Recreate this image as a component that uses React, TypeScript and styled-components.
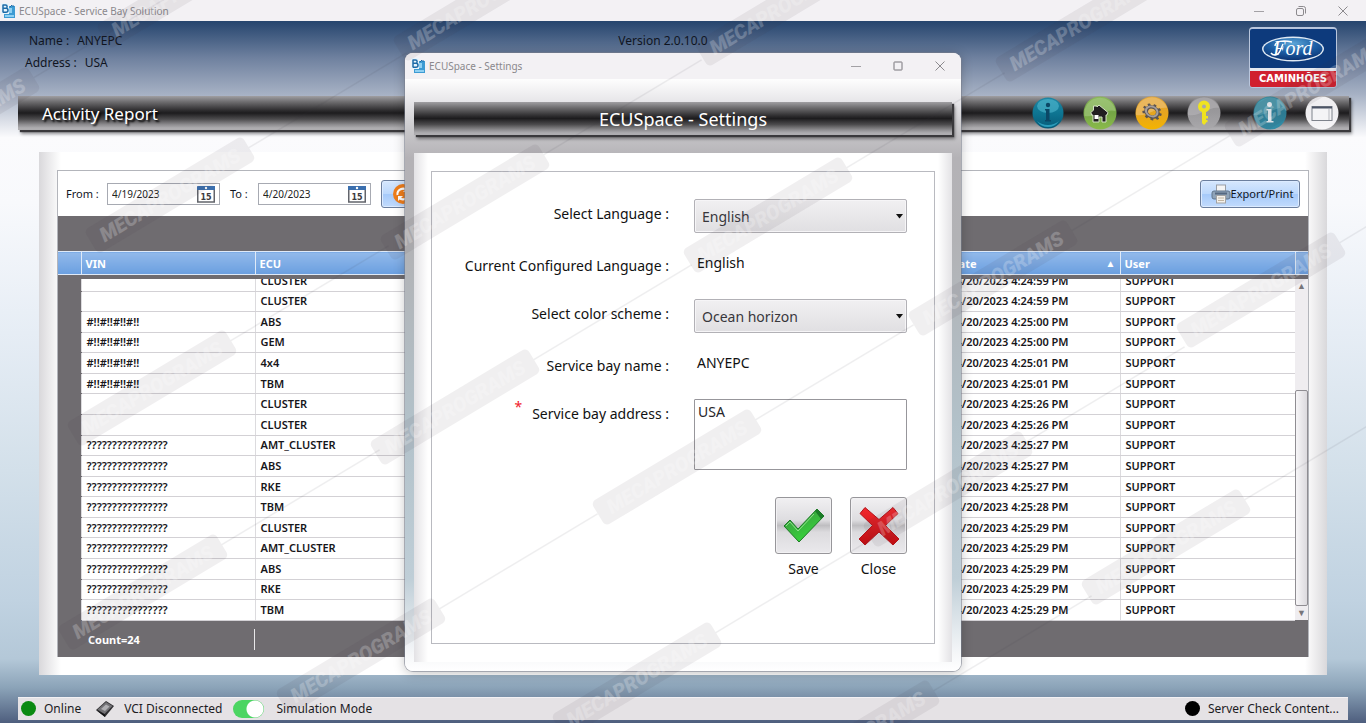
import React, { useState } from "react";
import styled, { createGlobalStyle, css } from "styled-components";

const GlobalStyle = createGlobalStyle`
  * { box-sizing: border-box; }
  body { margin: 0; background: #55637f; }
  body, button, input, select, textarea, table {
    font-family: "Noto Sans", "Open Sans", sans-serif;
  }
  button { padding: 0; margin: 0; cursor: pointer; }
`;

const Shell = styled.div`
  position: relative;
  display: flex;
  flex-direction: column;
  min-height: 100vh;
  overflow: hidden;
  color: #10151f;
  background: linear-gradient(
    180deg,
    #27466f 0%,
    #27466f 3%,
    #6f819f 8%,
    #a6b1c4 13%,
    #fbfbfd 19%,
    #f8f9fc 28%,
    #e6edf5 46%,
    #d3e0ea 65%,
    #c0d2e1 83%,
    #b4c8d8 91%,
    #8ba3b8 95%,
    #4c5c7c 100%
  );
`;

const TitleBar = styled.header<{ $tall?: boolean }>`
  display: flex;
  align-items: center;
  height: ${(p) => (p.$tall ? 26 : 21)}px;
  padding-left: ${(p) => (p.$tall ? 6 : 1)}px;
  padding-right: ${(p) => (p.$tall ? 0 : 2)}px;
  background: #f3f1f4;
  color: #8a888c;
  font-size: 10px;
  flex: none;
  h1, h2 { margin: 0 0 0 3px; font-size: 10px; font-weight: 400; flex: 1; }
`;

const WindowButton = styled.button`
  display: flex;
  align-items: center;
  justify-content: center;
  width: 42px;
  height: 20px;
  border: 0;
  background: none;
`;

const Identity = styled.div`
  display: flex;
  justify-content: space-between;
  align-items: flex-start;
  height: 75px;
  padding: 6px 29px 0 25px;
  flex: none;
`;

const Side = styled.div<{ $end?: boolean }>`
  flex: 1;
  display: flex;
  flex-direction: column;
  align-items: ${(p) => (p.$end ? "flex-end" : "flex-start")};
`;

const InfoLine = styled.div<{ $indent?: number }>`
  display: flex;
  gap: 8px;
  height: 22px;
  line-height: 28px;
  padding-left: ${(p) => p.$indent ?? 0}px;
  font-size: 12px;
`;

const Version = styled(InfoLine)`
  padding-right: 36px;
`;

const bandFill = css`
  background: linear-gradient(
    180deg,
    #a09fa2 0%,
    #6c6b6d 18%,
    #2e2d2f 42%,
    #1d1c1e 50%,
    #4c4b4d 68%,
    #8d8c8f 84%,
    #aeadb0 94%,
    #aeadb0 100%
  );
  box-shadow: 2px 2px 1px #3a393c, 3px 4px 3px rgba(0, 0, 0, 0.4);
`;

const Band = styled.div`
  ${bandFill}
  display: flex;
  align-items: center;
  justify-content: space-between;
  height: 34px;
  margin: 0 17px 0 18px;
  padding: 0 10px 0 24px;
  flex: none;
  h2 {
    margin: 0;
    color: #fff;
    font-size: 17px;
    font-weight: 400;
    text-shadow: 2px 2px 2px #000;
  }
`;

const IconBar = styled.nav`
  display: flex;
  align-items: center;
  gap: 18px;
  button:nth-child(4) { margin-right: 14px; }
`;

const RoundButton = styled.button`
  width: 34px;
  height: 34px;
  border: 0;
  background: none;
  svg { display: block; }
`;

const Report = styled.main`
  display: flex;
  flex-direction: column;
  flex: 1;
  margin: 22px 39px 0;
  padding: 18px;
  background: linear-gradient(90deg, #d9d8db 0, #fff 22px, #fff calc(100% - 22px), #d9d8db 100%);
`;

const ReportFrame = styled.section`
  display: flex;
  flex-direction: column;
  flex: 1;
  border: 1px solid #b3b5bb;
  border-bottom: 0;
`;

const Filters = styled.form`
  display: flex;
  align-items: center;
  height: 45px;
  padding: 0 8px;
  background: #fff;
  font-size: 11px;
  flex: none;
`;

const FilterLabel = styled.label<{ $second?: boolean }>`
  width: ${(p) => (p.$second ? 28 : 41)}px;
  margin-left: ${(p) => (p.$second ? 10 : 0)}px;
`;

const DateBox = styled.span`
  display: flex;
  align-items: center;
  width: 113px;
  height: 22px;
  padding-right: 4px;
  border: 1px solid #a7aab2;
  background: #fff;
  input {
    flex: 1;
    min-width: 0;
    padding: 0 4px;
    border: 0;
    background: none;
    font-size: 10px;
    color: #222;
  }
`;

const BlueButton = styled.button<{ $push?: boolean }>`
  display: flex;
  align-items: center;
  justify-content: ${(p) => (p.$push ? "center" : "flex-start")};
  width: 100px;
  height: 28px;
  margin-left: ${(p) => (p.$push ? "auto" : "10px")};
  padding-left: ${(p) => (p.$push ? 4 : 10)}px;
  border: 1px solid #6c7f9e;
  border-radius: 3px;
  background: linear-gradient(180deg, #d6e7fd 0%, #bcd8fc 48%, #a6cafa 52%, #c2dbfc 100%);
  box-shadow: inset 0 0 0 1px #dcebff;
  font-size: 11px;
  color: #10151f;
`;

const GridTop = styled.div`
  height: 35px;
  background: #6f6c70;
  flex: none;
`;

const DataTable = styled.table`
  width: 100%;
  border-collapse: collapse;
  table-layout: fixed;
  font-size: 11px;
  font-weight: 600;
  th, td { padding: 0 0 0 5px; text-align: left; white-space: nowrap; }
  col.mark { width: 23px; }
  col.vin { width: 174px; }
  col.date { width: 174px; }
  col.user { width: 175px; }
  col.bar { width: 13px; }
`;

const HeadTable = styled(DataTable)`
  flex: none;
  th {
    height: 23px;
    padding-left: 4px;
    color: #fff;
    font-weight: 700;
    border-left: 1px solid #dfeaf8;
    border-top: 1px solid #dfeaf8;
    border-bottom: 1px solid #dfeaf8;
    background: linear-gradient(180deg, #92b9ea, #6a9fe0);
  }
  th:first-child { border-left: 0; }
`;

const SortMark = styled.span`
  float: right;
  margin-right: 4px;
  font-size: 10px;
  line-height: 14px;
`;

const GridBody = styled.div`
  display: flex;
  flex: 1;
  min-height: 346px;
  border-top: 4px solid #6f6c70;
  background: #6f6c70;
`;

const Rows = styled.div`
  display: flex;
  flex-direction: column;
  justify-content: flex-end;
  flex: 1;
  height: 342px;
  overflow: hidden;
`;

const BodyTable = styled(DataTable)`
  height: 350px;
  flex: none;
  td {
    background: #fff;
    border-bottom: 1px solid #d3d1d5;
    border-left: 1px solid #dcdbde;
    line-height: 18px;
    color: #17161a;
  }
  td:nth-child(4) { padding-left: 9px; }
  td:first-child { background: #6f6c70; border-left: 0; border-bottom-color: #6f6c70; }
`;

const ScrollTrack = styled.div`
  display: flex;
  flex-direction: column;
  justify-content: space-between;
  align-items: center;
  width: 13px;
  height: 341px;
  background: #efedf0;
  color: #77757a;
  font-size: 9px;
  line-height: 14px;
`;

const ScrollThumb = styled.div`
  width: 13px;
  height: 216px;
  margin-top: auto;
  border: 1px solid #8f8d92;
  border-radius: 2px;
  background: linear-gradient(90deg, #f7f6f8, #dcdade);
`;

const GridFoot = styled.footer`
  display: flex;
  align-items: center;
  height: 36px;
  padding-left: 30px;
  background: #6f6c70;
  color: #fff;
  font-size: 11px;
  font-weight: 700;
  flex: none;
  span { width: 167px; height: 21px; line-height: 21px; border-right: 1px solid #e8e7e9; }
`;

const StatusBar = styled.footer`
  display: flex;
  align-items: center;
  height: 23px;
  margin: 22px 18px 4px;
  padding: 0 9px 1px 3px;
  border-top: 1px solid #f3f1f4;
  background: #e5e2e5;
  font-size: 12px;
  line-height: 20px;
  color: #1c1b1f;
  flex: none;
`;

const Dot = styled.i<{ $color: string }>`
  width: 15px;
  height: 15px;
  margin-right: 8px;
  border-radius: 50%;
  background: ${(p) => p.$color};
`;

const StatusText = styled.span<{ $before?: number; $after?: number }>`
  margin-left: ${(p) => p.$before ?? 0}px;
  margin-right: ${(p) => p.$after ?? 0}px;
`;

const Spacer = styled.span`
  flex: 1;
`;

const Switch = styled.input`
  appearance: none;
  width: 31px;
  height: 18px;
  margin: 0 13px 0 0;
  border-radius: 9px;
  background: radial-gradient(circle 8px at 22px 9px, #fff 8px, transparent 9px) #4cd562;
`;

const Overlay = styled.div`
  position: absolute;
  inset: 0;
  display: flex;
  justify-content: center;
  align-items: flex-start;
  padding-top: 53px;
`;

const Dialog = styled.section`
  display: flex;
  flex-direction: column;
  width: 556px;
  border-radius: 8px;
  overflow: hidden;
  color: #111;
  background: linear-gradient(
    180deg,
    #ffffff 4%,
    #e6e5e8 8%,
    #c6c5c8 13%,
    #b4b2b6 17%,
    #b2b2b5 30%,
    #b2c1c9 60%,
    #bfced7 85%,
    #f4f6f8 97%,
    #fff 100%
  );
  box-shadow: 0 0 0 1px rgba(120, 125, 140, 0.55), 0 2px 12px rgba(0, 0, 0, 0.25);
`;

const DialogBand = styled.div`
  ${bandFill}
  height: 33px;
  margin: 23px 9px 0;
  color: #fff;
  font-size: 18px;
  line-height: 34px;
  text-align: center;
`;

const DialogPanel = styled.div`
  margin: 18px 9px 9px;
  padding: 18px 17px;
  background: linear-gradient(90deg, #e3e2e5 0, #fff 14px, #fff calc(100% - 14px), #e3e2e5 100%);
`;

const SettingsForm = styled.form`
  padding: 27px 27px 64px 0;
  border: 1px solid #b9bac0;
  background: #fff;
  font-size: 14px;
`;

const Fields = styled.div`
  display: grid;
  grid-template-columns: 1fr 213px;
  column-gap: 25px;
  row-gap: 16px;
`;

const FieldLabel = styled.label<{ $plain?: boolean }>`
  height: 34px;
  line-height: ${(p) => (p.$plain ? 34 : 30)}px;
  text-align: right;
`;

const Required = styled.span`
  margin-right: 10px;
  color: #f0202c;
  vertical-align: top;
  line-height: 16px;
`;

const FieldValue = styled.output`
  padding-left: 3px;
  line-height: 28px;
`;

const SelectWrap = styled.div`
  position: relative;
  svg { position: absolute; right: 4px; top: 15px; pointer-events: none; }
`;

const Select = styled.select`
  appearance: none;
  display: block;
  width: 100%;
  height: 34px;
  padding: 0 7px;
  border: 1px solid #b2b1b6;
  border-radius: 2px;
  background: linear-gradient(180deg, #f1f0f2, #e0dfe2);
  box-shadow: inset 0 0 0 1px #f6f5f7;
  color: #38373c;
  font-size: 14px;
`;

const Address = styled.textarea`
  display: block;
  width: 100%;
  height: 71px;
  padding: 2px 3px;
  border: 1px solid #97969b;
  border-radius: 1px;
  resize: none;
  font-size: 14px;
  line-height: 20px;
  color: #26252a;
`;

const Actions = styled.div`
  display: flex;
  justify-content: flex-end;
  gap: 18px;
  margin-top: 27px;
`;

const Action = styled.label`
  display: flex;
  flex-direction: column;
  align-items: center;
  width: 57px;
  gap: 5px;
  line-height: 20px;
  button {
    display: flex;
    align-items: center;
    justify-content: center;
    width: 57px;
    height: 57px;
    border: 1px solid #97969a;
    border-radius: 3px;
    background: linear-gradient(180deg, #f1f0f2 0%, #dedde0 40%, #bfbec1 50%, #dcdbde 62%, #eae9ec 100%);
    box-shadow: inset 0 0 0 1px #f2f1f3;
  }
`;

const WatermarkLayer = styled.svg`
  position: absolute;
  left: 0;
  top: 0;
  pointer-events: none;
`;

const AppGlyph = () => (
  <svg width="15" height="16" viewBox="0 0 15 16" aria-hidden="true">
    <path d="M8 3h6v12H3v-4h5z" fill="#3d9bd3" />
    <path d="M8 5h3v5H8zM4 12h9v2H4z" fill="#8fd0f2" />
    <path d="M0 0h8v11H0z" fill="#e8f4fb" />
    <path d="M2 1.500V9.500M2 2h2.500a1.600 1.600 0 0 1 0 3.300H2M2 5.300h3a2 2 0 0 1 0 4H2" fill="none" stroke="#1c6ba8" strokeWidth="1.500" />
    <path d="M9 4l2-2M12 4V2" stroke="#1c6ba8" />
  </svg>
);

const WindowControls = ({ restore }: { restore?: boolean }) => (
  <>
    <WindowButton type="button" aria-label="Minimize">
      <svg width="10" height="10"><path d="M0 5.500h10" stroke="#a3a1a5" /></svg>
    </WindowButton>
    <WindowButton type="button" aria-label={restore ? "Restore" : "Maximize"}>
      {restore ? (
        <svg width="10" height="10" fill="none" stroke="#8c8a8e">
          <rect x=".5" y="2.500" width="7" height="7" rx="1.500" />
          <path d="M2.500 .5h5a2 2 0 0 1 2 2v5" />
        </svg>
      ) : (
        <svg width="10" height="10" fill="none" stroke="#77757a"><rect x="1" y="1" width="8" height="8" rx=".5" /></svg>
      )}
    </WindowButton>
    <WindowButton type="button" aria-label="Close window">
      <svg width="10" height="10"><path d="M.5.5l9 9m0-9l-9 9" stroke="#8c8a8e" /></svg>
    </WindowButton>
  </>
);

const FordLogo = () => (
  <svg width="88" height="62" viewBox="0 0 88 62" role="img" aria-label="Ford Caminhões">
    <defs>
      <radialGradient id="oval" cx=".5" cy=".25" r=".8">
        <stop offset="0" stopColor="#5da7d8" />
        <stop offset=".5" stopColor="#1d5fa6" />
        <stop offset="1" stopColor="#0a2f6e" />
      </radialGradient>
    </defs>
    <rect width="88" height="61" rx="4" fill="#b9c6dc" />
    <rect x="1" y="2" width="86" height="40" rx="2" fill="#0d3a7c" />
    <rect x="1" y="41" width="86" height="3" fill="#e5e9f0" />
    <path d="M1 44h86v14a2 2 0 0 1-2 2H3a2 2 0 0 1-2-2z" fill="#d0202e" />
    <ellipse cx="44" cy="22" rx="31" ry="12.500" fill="#dfe9f3" />
    <ellipse cx="44" cy="22" rx="29.500" ry="11" fill="url(#oval)" />
    <text x="44" y="28" textAnchor="middle" fontFamily="Liberation Serif, serif" fontStyle="italic" fontSize="20" fill="#fff">Ford</text>
    <path d="M22 26c2 3 7 3 9-2l3-7M26 19c0-5 8-6 17-4" fill="none" stroke="#fff" strokeWidth="1.400" />
    <text x="44" y="55" textAnchor="middle" fontFamily="DejaVu Sans, sans-serif" fontWeight="700" fontSize="10" fill="#fff">CAMINHÕES</text>
  </svg>
);

const Disc = ({ top, mid, low, r = 16.5, children }: { top: string; mid: string; low: string; r?: number; children: React.ReactNode }) => {
  const id = "disc" + mid.slice(1);
  return (
    <svg width="34" height="34" viewBox="0 0 34 34" aria-hidden="true">
      <defs>
        <linearGradient id={id} x1="0" y1="0" x2="0" y2="1">
          <stop offset="0" stopColor={top} />
          <stop offset=".5" stopColor={mid} />
          <stop offset="1" stopColor={low} />
        </linearGradient>
      </defs>
      <circle cx="17" cy="17" r={r} fill={`url(#${id})`} />
      {children}
    </svg>
  );
};

const gearTeeth = Array.from({ length: 9 }, (_, i) => i * 40);

const Toolbar = () => (
  <IconBar aria-label="Main">
    <RoundButton type="button" aria-label="Information">
      <Disc top="#1f86a3" mid="#0e7592" low="#075a78" r={15.5}>
        <ellipse cx="17" cy="10" rx="11" ry="7" fill="#5bc5dc" opacity=".5" />
        <path d="M6 25a13 13 0 0 0 22 0 17 17 0 0 1-22 0z" fill="#39b7d5" opacity=".7" />
        <circle cx="17" cy="9" r="2.200" fill="#0b4766" />
        <path d="M14 13h4.500v11h1.500v1.500h-6V24h1v-9.500h-1z" fill="#0b4766" />
      </Disc>
    </RoundButton>
    <RoundButton type="button" aria-label="Home">
      <Disc top="#8cb85c" mid="#74a545" low="#8bbb4b">
        <path d="M1.500 20a15.500 15.500 0 0 1 31-5c-9-3-18 7-31 5z" fill="#a5c982" opacity=".6" />
        <path d="M16 9l9 7.500-1 2.500h-1v7h-4v-5h-3v5h-6v-7H8.500L8 16.500l2.500-2.500v-4h3.500v1z" fill="#211f20" stroke="#d5e3c5" strokeWidth="1" />
        <path d="M11.500 19h4v4h-4z" fill="#fff" />
      </Disc>
    </RoundButton>
    <RoundButton type="button" aria-label="Settings">
      <Disc top="#e0a53a" mid="#e6a51f" low="#f4b400">
        <path d="M1 19a16 16 0 0 1 31-7c-10-2-18 9-31 7z" fill="#efc37c" opacity=".6" />
        <g transform="rotate(25 17 16) translate(17 16) scale(1 .8) translate(-17 -16)">
          {gearTeeth.map((a) => (
            <rect key={a} x="15.500" y="6" width="3" height="4" rx=".6" fill="#5d5550" transform={`rotate(${a} 17 16)`} />
          ))}
          <circle cx="17" cy="16" r="6" fill="none" stroke="#5b5453" strokeWidth="4" />
          <circle cx="16.500" cy="15.500" r="6" fill="none" stroke="#a59e9c" strokeWidth="2.200" />
        </g>
      </Disc>
    </RoundButton>
    <RoundButton type="button" aria-label="Access key">
      <Disc top="#8f8e91" mid="#9a999c" low="#aaa9ac">
        <path d="M1 19a16 16 0 0 1 31-7c-10-2-18 9-31 7z" fill="#bbbabd" opacity=".5" />
        <circle cx="17" cy="10.500" r="4" fill="none" stroke="#efe320" strokeWidth="4" />
        <path d="M15 15h4v12l-2 2-2-2z" fill="#efe320" />
        <path d="M18 20h3v2.500h-3zM18 24h2.500v2.200H18z" fill="#efe320" />
      </Disc>
    </RoundButton>
    <RoundButton type="button" aria-label="About">
      <Disc top="#35889c" mid="#2c8199" low="#348ea8">
        <path d="M1 19a16 16 0 0 1 31-7c-10-2-18 9-31 7z" fill="#67aebd" opacity=".5" />
        <circle cx="16.500" cy="8.500" r="2.500" fill="#e9eff3" />
        <path d="M13.500 13h5v12h2v1.500h-7V25h1.500V14.500h-1.500z" fill="#e9eff3" />
      </Disc>
    </RoundButton>
    <RoundButton type="button" aria-label="Window">
      <Disc top="#f1f0f2" mid="#efeef1" low="#f7f6f8">
        <rect x="7" y="10.500" width="20" height="14" fill="#f4f4f6" stroke="#7f838c" />
        <path d="M7 11.500h20" stroke="#4c5466" strokeWidth="2" />
        <path d="M24 24V13" stroke="#b9bbc1" />
      </Disc>
    </RoundButton>
  </IconBar>
);

const CalendarIcon = () => (
  <svg width="18" height="18" viewBox="0 0 18 18" aria-hidden="true">
    <rect x=".75" y="2" width="16.500" height="15" fill="#fff" stroke="#62646b" strokeWidth="1.500" />
    <path d="M0 1h18v4H0z" fill="#3b6fae" />
    <circle cx="9" cy="3" r="1.200" fill="#fff" />
    <text x="9" y="14.500" textAnchor="middle" fontFamily="DejaVu Sans, sans-serif" fontWeight="700" fontSize="8" fill="#3c3b40">15</text>
  </svg>
);

const PrinterIcon = () => (
  <svg width="20" height="20" viewBox="0 0 20 20" aria-hidden="true">
    <rect x="5.500" y="1" width="9" height="7" fill="#f4f4f4" stroke="#9a9ea5" />
    <rect x="1" y="7" width="18" height="8" rx="2" fill="#8fa3b8" stroke="#60748b" />
    <path d="M4 9.500h12" stroke="#566880" strokeWidth="2" />
    <rect x="5.500" y="11.500" width="9" height="7.500" fill="#f4f1ec" stroke="#a3a3a3" />
    <path d="M7 14h6M7 16.500h6" stroke="#c2b5a0" />
  </svg>
);

const RefreshIcon = () => (
  <svg width="22" height="22" viewBox="0 0 22 22" aria-hidden="true">
    <circle cx="11" cy="11" r="10" fill="#ef7d1a" />
    <path d="M5.500 12a5.500 5.500 0 0 1 9.500-4.500M16.500 10a5.500 5.500 0 0 1-9.500 4.500" fill="none" stroke="#fff" strokeWidth="2" />
    <path d="M16 4v5h-5zM6 18v-5h5z" fill="#fff" />
  </svg>
);

const CheckIcon = () => (
  <svg width="42" height="36" viewBox="0 0 42 36" aria-hidden="true">
    <defs>
      <linearGradient id="check" x1="0" y1="0" x2=".6" y2="1">
        <stop offset="0" stopColor="#a4e8a0" />
        <stop offset=".35" stopColor="#3aa83f" />
        <stop offset="1" stopColor="#37d83a" />
      </linearGradient>
    </defs>
    <path d="M1 18l6-6 8 9L34 1l7 7-25 26z" fill="url(#check)" stroke="#1c7a25" />
    <path d="M34 1l7 7-3 3-6-8z" fill="#1b7b27" />
    <path d="M3 18l4-4 8 9L31 6" fill="none" stroke="#a6eca0" strokeWidth="1" opacity=".8" />
  </svg>
);

const CrossIcon = () => (
  <svg width="42" height="40" viewBox="0 0 42 40" aria-hidden="true">
    <defs>
      <linearGradient id="cross" x1="0" y1="0" x2="0" y2="1">
        <stop offset="0" stopColor="#f4282c" />
        <stop offset="1" stopColor="#bd0d12" />
      </linearGradient>
    </defs>
    <path d="M7 1.500l14 12 14-12 5 6-12.500 12L41 33l-6 6-14-13L7 39l-6-6 13.500-13.500L2 7.500z" fill="url(#cross)" stroke="#b3141a" strokeLinejoin="round" />
  </svg>
);

const VciIcon = () => (
  <svg width="20" height="18" viewBox="0 0 20 18" aria-hidden="true">
    <path d="M1 10L11 1l8 5-9 11z" fill="#2f2e31" />
    <path d="M2.500 9.500L11 2l6.500 4-8 8z" fill="#737276" />
    <path d="M6 9l5-4.500 3.500 2L10 11z" fill="#b0afb3" />
    <path d="M1 10l9 4.500V17z" fill="#141416" />
  </svg>
);

const tags: [number, number][] = [
  [361, 656], [677, 467], [993, 278], [1309, 89],
  [143, 592], [455, 407], [768, 215], [1080, 24],
  [152, 388], [465, 202], [780, 8],
  [170, 195], [478, 3], [-45, 125], [182, -10],
  [637, 680], [948, 489], [1261, 290],
  [855, 738], [1166, 547], [1482, 358],
];

const Watermark = () => (
  <WatermarkLayer width="100%" height="100%" aria-hidden="true">
    {tags.map(([x, y]) => (
      <g key={`${x},${y}`} transform={`translate(${x} ${y}) rotate(-31)`}>
        <rect x="-92" y="-14" width="184" height="28" rx="5" fill="#3a3744" opacity=".08" />
        <path d="M92 0h184" stroke="#3a3744" strokeWidth="1.500" opacity=".08" />
        <text y="7" textAnchor="middle" fontFamily="Roboto, sans-serif" fontWeight="900" fontStyle="italic" fontSize="20" fill="#fff" opacity=".22">
          MECAPROGRAMS
        </text>
      </g>
    ))}
  </WatermarkLayer>
);

const marks = "#!!#!!#!!#!!";
const unknown = "????????????????";
const records: [string, string, string][] = [
  ["", "CLUSTER", "4:24:59"],
  ["", "CLUSTER", "4:24:59"],
  [marks, "ABS", "4:25:00"],
  [marks, "GEM", "4:25:00"],
  [marks, "4x4", "4:25:01"],
  [marks, "TBM", "4:25:01"],
  ["", "CLUSTER", "4:25:26"],
  ["", "CLUSTER", "4:25:26"],
  [unknown, "AMT_CLUSTER", "4:25:27"],
  [unknown, "ABS", "4:25:27"],
  [unknown, "RKE", "4:25:27"],
  [unknown, "TBM", "4:25:28"],
  [unknown, "CLUSTER", "4:25:29"],
  [unknown, "AMT_CLUSTER", "4:25:29"],
  [unknown, "ABS", "4:25:29"],
  [unknown, "RKE", "4:25:29"],
  [unknown, "TBM", "4:25:29"],
];

const Picker = ({ id, label, options }: { id: string; label: string; options: string[] }) => (
  <>
    <FieldLabel htmlFor={id}>{label}</FieldLabel>
    <SelectWrap>
      <Select id={id}>
        {options.map((o) => <option key={o}>{o}</option>)}
      </Select>
      <svg width="7" height="5" aria-hidden="true"><path d="M0 0h7L3.500 4.500z" fill="#111" /></svg>
    </SelectWrap>
  </>
);

const SettingsDialog = () => {
  const [address, setAddress] = useState("USA");
  return (
    <Overlay>
      <Dialog role="dialog" aria-labelledby="dialog-title">
        <TitleBar $tall>
          <AppGlyph />
          <h2 id="dialog-title">ECUSpace - Settings</h2>
          <WindowControls />
        </TitleBar>
        <DialogBand>ECUSpace - Settings</DialogBand>
        <DialogPanel>
          <SettingsForm onSubmit={(e) => e.preventDefault()}>
            <Fields>
              <Picker id="language" label="Select Language :" options={["English"]} />
              <FieldLabel $plain htmlFor="current">Current Configured Language :</FieldLabel>
              <FieldValue id="current">English</FieldValue>
              <Picker id="scheme" label="Select color scheme :" options={["Ocean horizon"]} />
              <FieldLabel $plain htmlFor="bay">Service bay name :</FieldLabel>
              <FieldValue id="bay">ANYEPC</FieldValue>
              <FieldLabel htmlFor="address"><Required>*</Required>Service bay address :</FieldLabel>
              <Address id="address" value={address} onChange={(e) => setAddress(e.target.value)} />
            </Fields>
            <Actions>
              <Action><button type="submit"><CheckIcon /></button>Save</Action>
              <Action><button type="button"><CrossIcon /></button>Close</Action>
            </Actions>
          </SettingsForm>
        </DialogPanel>
      </Dialog>
    </Overlay>
  );
};

export default function App() {
  const [simulate, setSimulate] = useState(true);
  return (
    <Shell>
      <GlobalStyle />
      <TitleBar>
        <AppGlyph />
        <h1>ECUSpace - Service Bay Solution</h1>
        <WindowControls restore />
      </TitleBar>
      <Identity>
        <Side>
          <InfoLine $indent={4}><span>Name :</span><span>ANYEPC</span></InfoLine>
          <InfoLine><span>Address :</span><span>USA</span></InfoLine>
        </Side>
        <Version>Version 2.0.10.0</Version>
        <Side $end><FordLogo /></Side>
      </Identity>
      <Band>
        <h2>Activity Report</h2>
        <Toolbar />
      </Band>
      <Report>
        <ReportFrame>
          <Filters onSubmit={(e) => e.preventDefault()}>
            <FilterLabel htmlFor="from">From :</FilterLabel>
            <DateBox><input id="from" defaultValue="4/19/2023" /><CalendarIcon /></DateBox>
            <FilterLabel $second htmlFor="to">To :</FilterLabel>
            <DateBox><input id="to" defaultValue="4/20/2023" /><CalendarIcon /></DateBox>
            <BlueButton type="submit" aria-label="Refresh"><RefreshIcon /></BlueButton>
            <BlueButton type="button" $push><PrinterIcon />Export/Print</BlueButton>
          </Filters>
          <GridTop />
          <HeadTable>
            <colgroup>
              <col className="mark" /><col className="vin" /><col /><col className="date" /><col className="user" /><col className="bar" />
            </colgroup>
            <thead>
              <tr><th /><th>VIN</th><th>ECU</th><th>Date<SortMark>▲</SortMark></th><th>User</th><th /></tr>
            </thead>
          </HeadTable>
          <GridBody>
            <Rows>
              <BodyTable>
                <colgroup>
                  <col className="mark" /><col className="vin" /><col /><col className="date" /><col className="user" />
                </colgroup>
                <tbody>
                  {records.map(([vin, ecu, time], i) => (
                    <tr key={i}>
                      <td /><td>{vin}</td><td>{ecu}</td><td>4/20/2023 {time} PM</td><td>SUPPORT</td>
                    </tr>
                  ))}
                </tbody>
              </BodyTable>
            </Rows>
            <ScrollTrack><span>▲</span><ScrollThumb /><span>▼</span></ScrollTrack>
          </GridBody>
          <GridFoot><span>Count=24</span></GridFoot>
        </ReportFrame>
      </Report>
      <StatusBar>
        <Dot $color="#0a8a12" />
        <StatusText $after={14}>Online</StatusText>
        <VciIcon />
        <StatusText $before={9} $after={10}>VCI Disconnected</StatusText>
        <Switch id="simulate" type="checkbox" role="switch" checked={simulate} onChange={() => setSimulate(!simulate)} />
        <label htmlFor="simulate">Simulation Mode</label>
        <Spacer />
        <Dot $color="#000" />
        <StatusText>Server Check Content...</StatusText>
      </StatusBar>
      <SettingsDialog />
      <Watermark />
    </Shell>
  );
}
